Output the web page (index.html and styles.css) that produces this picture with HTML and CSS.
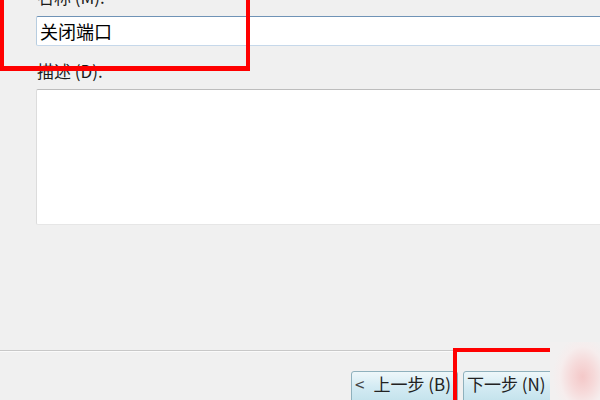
FILE: index.html
```html
<!DOCTYPE html>
<html lang="zh">
<head>
<meta charset="utf-8">
<link rel="stylesheet" href="styles.css">
</head>
<body>
<div class="window">
  <div class="content">
    <div class="label label-top">名称 (M):</div>
    <div class="input">关闭端口</div>
    <div class="label label-desc">描述 (D):</div>
    <div class="textarea"></div>
  </div>
  <div class="footer">
    <div class="separator"></div>
    <div class="buttons">
      <div class="btn"><span class="lt">&lt;</span>上一步 (B)</div>
      <div class="btn">下一步 (N)</div>
    </div>
  </div>
  <div class="mark mark-one"></div>
  <div class="mark mark-two"></div>
  <div class="watermark"></div>
</div>
</body>
</html>
```
FILE: styles.css
```css
html, body {
  margin: 0;
  padding: 0;
  background: #f0f0f0;
  overflow: hidden;
}
.window {
  position: relative;
  width: 600px;
  height: 400px;
  display: flex;
  flex-direction: column;
  font-family: "Noto Sans CJK SC", "DejaVu Sans", sans-serif;
  color: #111;
  overflow: hidden;
}
.content {
  flex: 1;
  padding-left: 36px;
  display: flex;
  flex-direction: column;
}
.label {
  font-size: 17px;
  line-height: 20px;
  height: 20px;
  padding-left: 1px;
  color: #1a1a1a;
}
.label-top {
  margin-top: -13px;
  margin-bottom: 9px;
}
.label-desc {
  margin-top: 15px;
  margin-bottom: 8px;
}
.input {
  height: 30px;
  box-sizing: border-box;
  background: #fff;
  border-top: 1px solid #6f93b6;
  border-left: 1px solid #b7cde0;
  border-bottom: 1px solid #c6d8ea;
  border-radius: 2px 0 0 2px;
  font-size: 18px;
  line-height: 28px;
  padding-left: 3px;
  color: #000;
}
.textarea {
  height: 136px;
  box-sizing: border-box;
  background: #fff;
  border-top: 1px solid #bdbdbd;
  border-left: 1px solid #dcdcdc;
  border-bottom: 1px solid #e6e6e6;
  border-radius: 2px 0 0 2px;
}
.footer {
  height: 50px;
  display: flex;
  flex-direction: column;
}
.separator {
  height: 1px;
  background: #a9a9a9;
  border-bottom: 1px solid #c8c8c8;
  box-shadow: 0 1px 0 #fafafa;
}
.buttons {
  display: flex;
  justify-content: flex-end;
  gap: 5px;
  padding-top: 20px;
  padding-right: 30px;
}
.btn {
  width: 107px;
  height: 32px;
  box-sizing: border-box;
  border: 1px solid #8fb1bd;
  border-radius: 3px;
  background: linear-gradient(#eef7fa, #d3ebf3 50%, #c3e2ec);
  font-family: "Noto Sans CJK SC", "DejaVu Sans", sans-serif;
  font-size: 17px;
  line-height: 23px;
  padding-left: 3px;
  color: #222;
  white-space: nowrap;
  overflow: hidden;
}
.lt {
  margin-right: 9px;
  color: #444;
}
.mark {
  position: absolute;
  border: 4px solid #f00;
  box-sizing: border-box;
}
.mark-one {
  left: 0;
  top: -20px;
  width: 250px;
  height: 91px;
  border-width: 5px 4px 5px 4px;
}
.mark-two {
  left: 453px;
  top: 348px;
  width: 160px;
  height: 80px;
}
.watermark {
  position: absolute;
  left: 550px;
  top: 342px;
  width: 50px;
  height: 58px;
  background: radial-gradient(ellipse 30px 40px at 65% 60%, #f4c8c8 0%, #f6dada 40%, #f6eded 75%, #f2f0f0 100%);
}
```
